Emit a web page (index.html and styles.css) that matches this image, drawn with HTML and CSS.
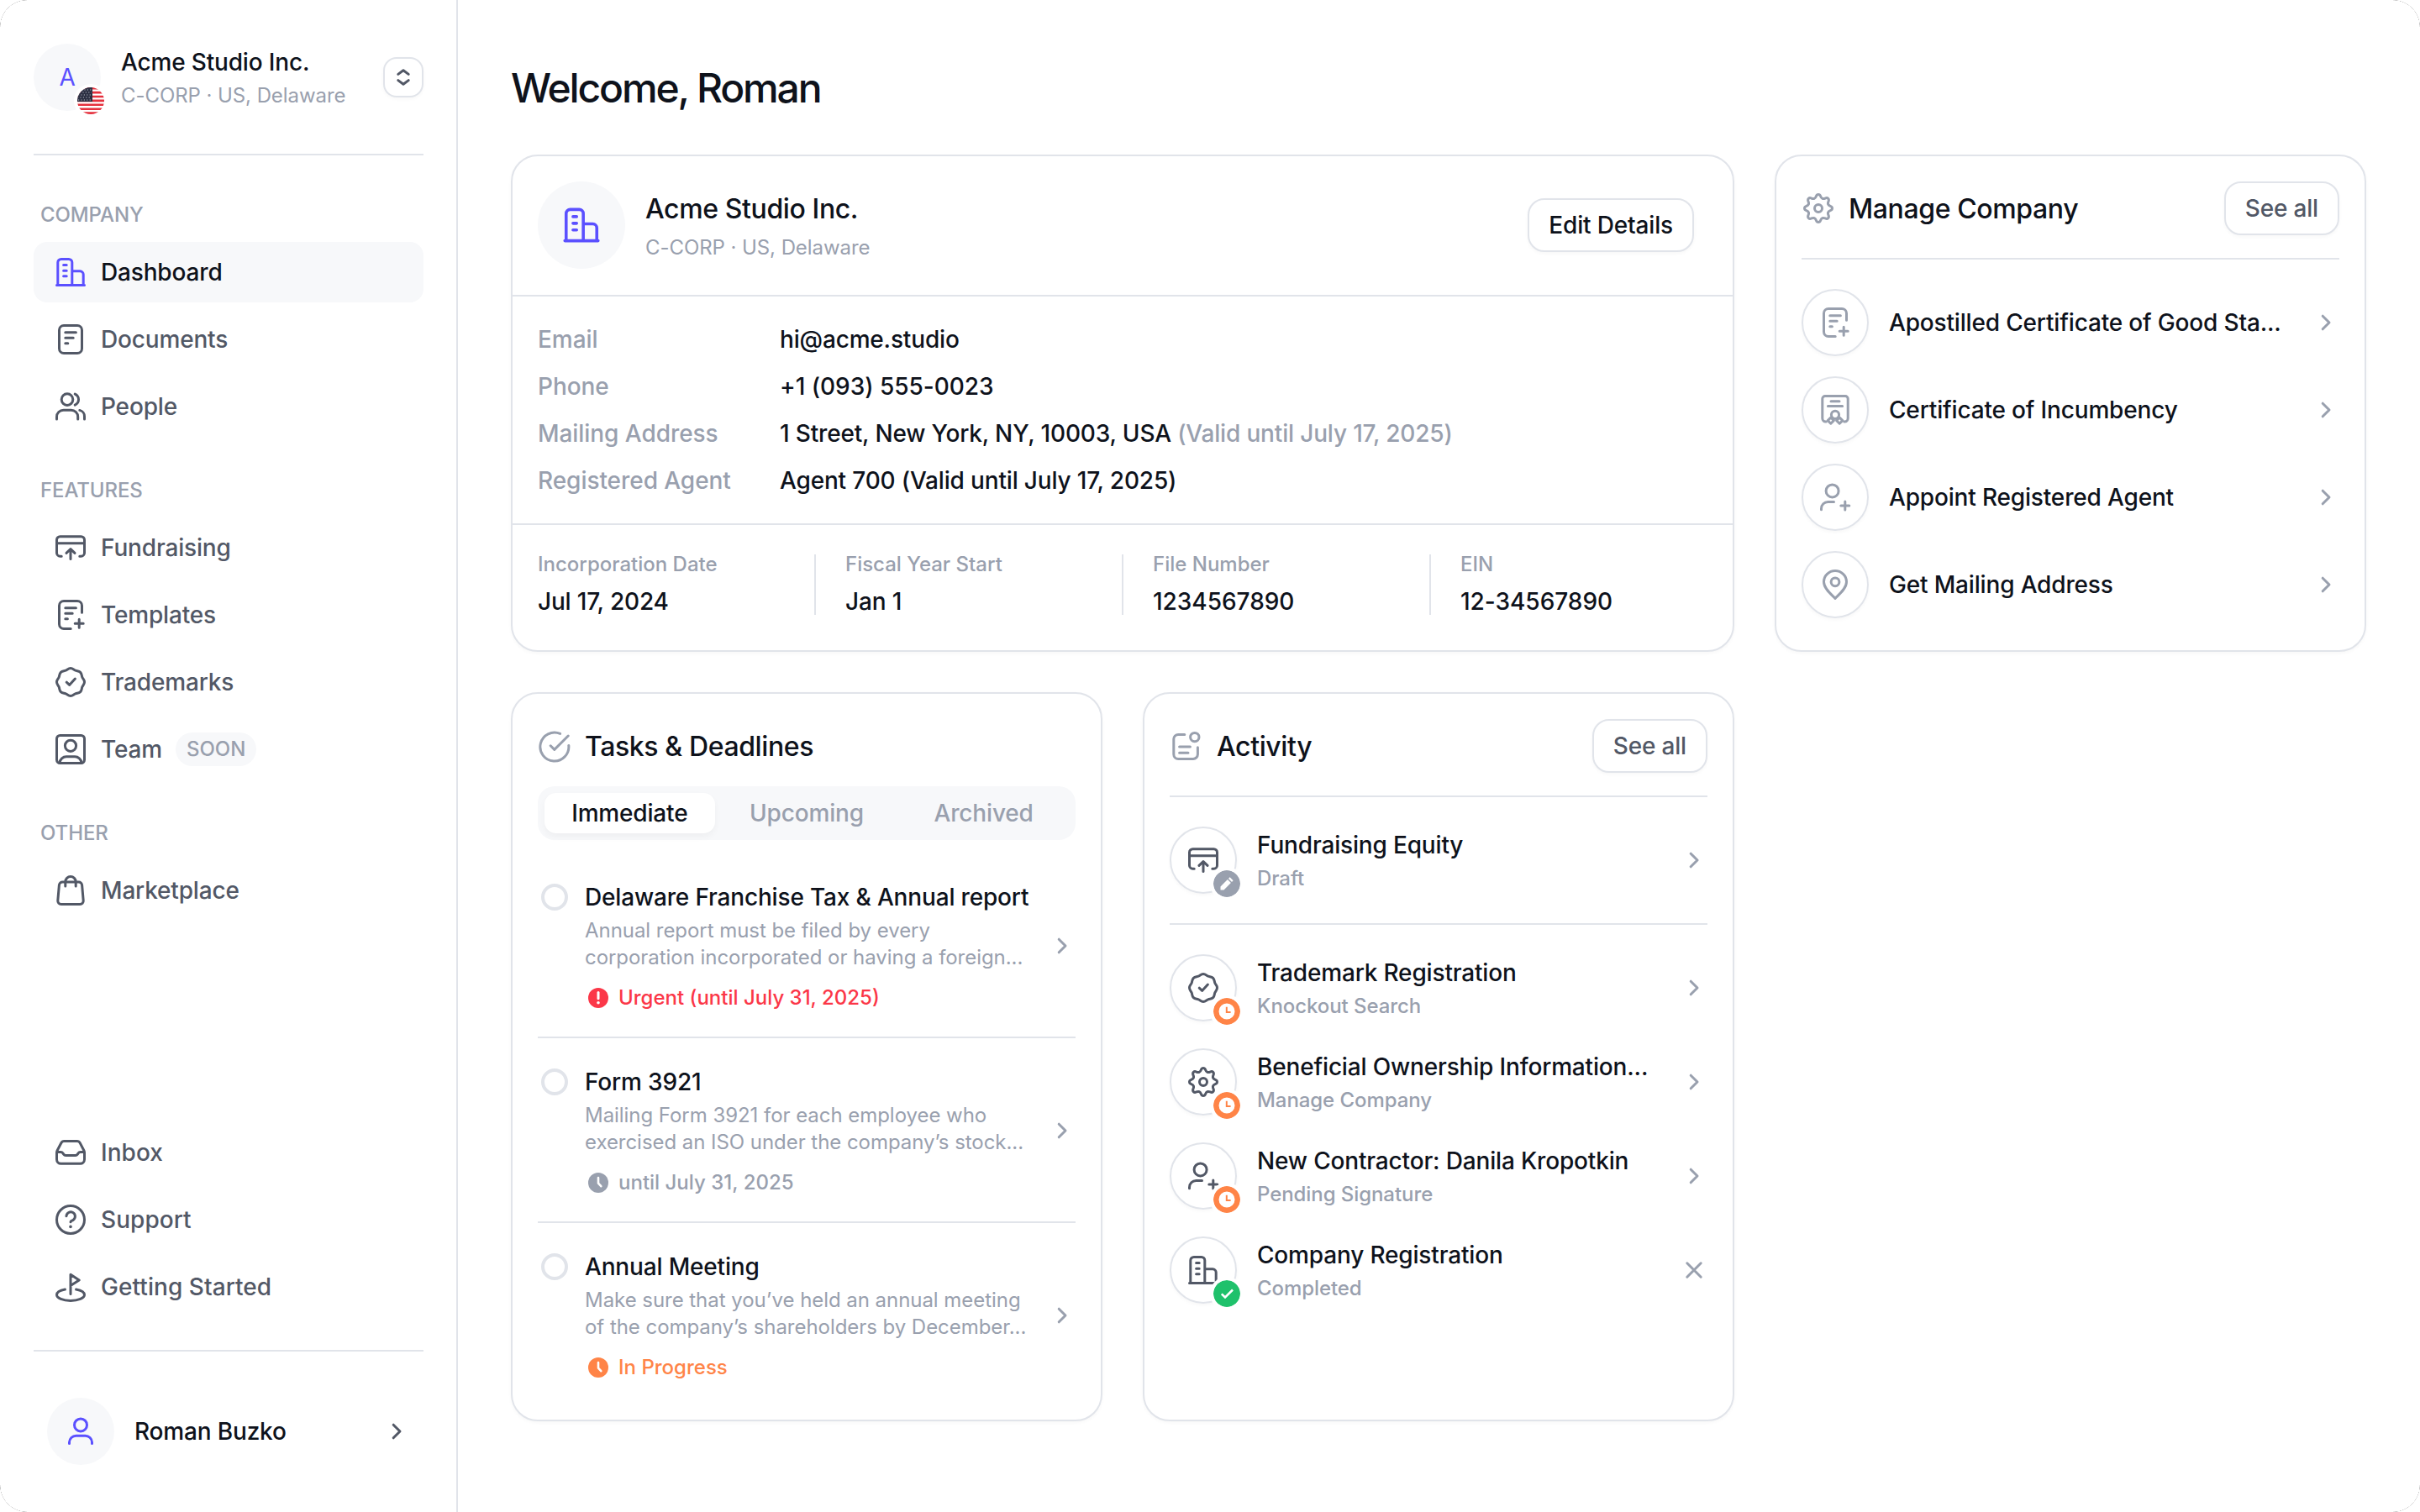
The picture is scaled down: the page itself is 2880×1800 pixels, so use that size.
FILE: index.html
```html
<!DOCTYPE html>
<html lang="en">
<head>
    <meta charset="UTF-8">
    <meta name="viewport" content="width=device-width, initial-scale=1.0">
    <title>Dashboard - Acme Studio Inc.</title>
    <link rel="stylesheet" href="styles.css">
</head>
<body>
    <!-- icon sprite -->
    <svg class="sprite" width="0" height="0">
        <symbol id="i-building" viewBox="0 0 20 20"><path d="M2.4 17.75V4.25a2 2 0 0 1 2-2h4.5a2 2 0 0 1 2 2v13.5M10.9 9.4h4.7a2 2 0 0 1 2 2v6.3M1.75 17.75h16.5M5.8 5.8h1.8M5.8 9.1h1.8M5.8 12.4h1.8"/></symbol>
        <symbol id="i-document" viewBox="0 0 20 20"><rect x="3.25" y="1.75" width="13.5" height="16.5" rx="2.75"/><path d="M6.9 5.9h6.3M6.9 9.1h4.7M6.9 12.4h1.5"/></symbol>
        <symbol id="i-template" viewBox="0 0 20 20"><path d="M16.75 8.6V4.5A2.75 2.75 0 0 0 14 1.75H6A2.75 2.75 0 0 0 3.25 4.5v11A2.75 2.75 0 0 0 6 18.25h4.1M6.9 5.9h6.3M6.9 9.1h4.2M6.9 12.4h1.3M15.1 12.6v5M12.6 15.1h5"/></symbol>
        <symbol id="i-people" viewBox="0 0 20 20"><circle cx="8" cy="5.8" r="3.4"/><path d="M1.75 17.5v-1.4a4 4 0 0 1 4-4h4.6a4 4 0 0 1 4 4v1.4M12.6 2.5a3.6 3.6 0 0 1 0 6.6M15.4 12.2a3.6 3.6 0 0 1 2.85 3.7v1.6"/></symbol>
        <symbol id="i-fund" viewBox="0 0 20 20"><path d="M4.6 15.1h-.85a2 2 0 0 1-2-2V5.35a2 2 0 0 1 2-2h12.5a2 2 0 0 1 2 2v7.75a2 2 0 0 1-2 2h-.85M1.75 7.4h16.5M10 16.7v-5.8M7.5 13.2l2.5-2.4 2.5 2.4"/></symbol>
        <symbol id="i-trademark" viewBox="0 0 20 20"><path d="M10 1.75c1.3 0 1.85.9 2.87 1.32c1.02.42 2.04.18 2.96 1.1c.92.92.68 1.94 1.1 2.96c.42 1.02 1.32 1.57 1.32 2.87c0 1.3-.9 1.85-1.32 2.87c-.42 1.02-.18 2.04-1.1 2.96c-.92.92-1.94.68-2.96 1.1c-1.02.42-1.57 1.32-2.87 1.32c-1.3 0-1.85-.9-2.87-1.32c-1.02-.42-2.04-.18-2.96-1.1c-.92-.92-.68-1.94-1.1-2.96c-.42-1.02-1.32-1.57-1.32-2.87c0-1.3.9-1.85 1.32-2.87c.42-1.02.18-2.04 1.1-2.96c.92-.92 1.94-.68 2.96-1.1c1.02-.42 1.57-1.32 2.87-1.32zM7.6 10.1l1.7 1.6 3.4-3.7"/></symbol>
        <symbol id="i-team" viewBox="0 0 20 20"><rect x="1.75" y="1.75" width="16.5" height="16.5" rx="2"/><circle cx="10" cy="7.9" r="3.3"/><path d="M3.5 18a4 4 0 0 1 4-3.6h5a4 4 0 0 1 4 3.6"/></symbol>
        <symbol id="i-bag" viewBox="0 0 20 20"><path d="M5.2 5h9.6a2 2 0 0 1 2 1.85l.8 9.2a2 2 0 0 1-2 2.2H4.4a2 2 0 0 1-2-2.2l.8-9.2A2 2 0 0 1 5.2 5zM6.9 7.5V4.85a3.1 3.1 0 0 1 6.2 0V7.5"/></symbol>
        <symbol id="i-inbox" viewBox="0 0 20 20"><path d="M6.2 3.25h7.6a2 2 0 0 1 1.8 1.1l2.3 4.4a3 3 0 0 1 .35 1.4v4a2.5 2.5 0 0 1-2.5 2.5H4.25a2.5 2.5 0 0 1-2.5-2.5v-4a3 3 0 0 1 .35-1.4l2.3-4.4a2 2 0 0 1 1.8-1.1zM1.75 9.75h2.4a1.6 1.6 0 0 1 1.3.7l.4.6a1.6 1.6 0 0 0 1.3.7h5.7a1.6 1.6 0 0 0 1.3-.7l.4-.6a1.6 1.6 0 0 1 1.3-.7h2.4"/></symbol>
        <symbol id="i-help" viewBox="0 0 20 20"><circle cx="10" cy="10" r="8.25"/><path d="M7.5 7.9a2.6 2.6 0 1 1 4 2.3c-.9.55-1.5.6-1.5 1.2"/><circle cx="10" cy="14.2" r=".9" fill="currentColor" stroke="none"/></symbol>
        <symbol id="i-golf" viewBox="0 0 20 20"><path d="M10 14.2V2.6l5.1 3.4L10 9.2M6.7 11.5C3.8 12 1.75 13.2 1.75 14.8c0 1.9 3.7 3.4 8.25 3.4s8.25-1.5 8.25-3.4c0-1.6-2.05-2.8-4.95-3.3"/></symbol>
        <symbol id="i-user" viewBox="0 0 20 20"><circle cx="10" cy="6.2" r="3.75"/><path d="M3.25 17.3v-.8a4 4 0 0 1 4-3.9h5.5a4 4 0 0 1 4 3.9v.8"/></symbol>
        <symbol id="i-user-plus" viewBox="0 0 20 20"><circle cx="8.3" cy="6.2" r="3.75"/><path d="M1.75 17.4v-.7a4 4 0 0 1 4-4h3.5M15.9 12.5v5M13.4 15h5"/></symbol>
        <symbol id="i-gear" viewBox="0 0 20 20"><path d="M10 1.75c1.7 0 .93 1.82 2.41 2.43c1.48.61 2.22-1.21 3.42-.01c1.2 1.2-.62 1.94-.01 3.42c.61 1.48 2.43.71 2.43 2.41c0 1.7-1.82.93-2.43 2.41c-.61 1.48 1.21 2.22.01 3.42c-1.2 1.2-1.94-.62-3.42-.01c-1.48.61-.71 2.43-2.41 2.43c-1.7 0-.93-1.82-2.41-2.43c-1.48-.61-2.22 1.21-3.42.01c-1.2-1.2.62-1.94.01-3.42c-.61-1.48-2.43-.71-2.43-2.41c0-1.7 1.82-.93 2.43-2.41c.61-1.48-1.21-2.22-.01-3.42c1.2-1.2 1.94.62 3.42.01c1.48-.61.71-2.43 2.41-2.43z"/><circle cx="10" cy="10" r="2.25"/></symbol>
        <symbol id="i-cert" viewBox="0 0 20 20"><path d="M4.6 17h-.2a2 2 0 0 1-2-2V3.35a1.6 1.6 0 0 1 1.6-1.6h12a1.6 1.6 0 0 1 1.6 1.6V15a2 2 0 0 1-2 2h-.2M7.5 4.9h5M5.7 7.8h8.6M7.4 14.5l1.8 1.8-1.8 1.8-1.8-1.8zM12.6 14.5l1.8 1.8-1.8 1.8-1.8-1.8z"/><circle cx="10" cy="12.9" r="2.3"/></symbol>
        <symbol id="i-pin" viewBox="0 0 20 20"><path d="M10 18.2C7.4 15.6 3.25 12.2 3.25 8.4a6.75 6.65 0 0 1 13.5 0c0 3.8-4.15 7.2-6.75 9.8z"/><circle cx="10" cy="8.4" r="2.45"/></symbol>
        <symbol id="i-tasks" viewBox="0 0 20 20"><path d="M13.3 2.2A8.5 8.5 0 1 0 18.4 9.2M7.6 9.4l2.3 2.3 8.2-8.2"/></symbol>
        <symbol id="i-activity" viewBox="0 0 20 20"><path d="M8.9 3.2H5.1a2.7 2.7 0 0 0-2.7 2.7V15a2.7 2.7 0 0 0 2.7 2.7h8.9a2.7 2.7 0 0 0 2.7-2.7v-4.1M5.8 10.5h6.4M5.8 14.1H11"/><circle cx="14.9" cy="4.8" r="2.6"/></symbol>
        <symbol id="i-chevron" viewBox="0 0 20 20"><path d="M8.1 6.1L12 10l-3.9 3.9"/></symbol>
        <symbol id="i-close" viewBox="0 0 20 20"><path d="M5.9 5.9l8.2 8.2M14.1 5.9l-8.2 8.2"/></symbol>
        <symbol id="i-sort" viewBox="0 0 20 20"><path d="M6.9 8.2L10 5.9l3.1 2.3M6.9 11.8l3.1 2.3 3.1-2.3"/></symbol>
        <symbol id="i-clock-badge" viewBox="0 0 32 32"><circle cx="16" cy="16" r="12.75" fill="#fff" stroke="#ff8447" stroke-width="6.5"/><path d="M15.8 10.8v6.1h4.8" fill="none" stroke="#ff8447" stroke-width="2" stroke-linecap="butt" stroke-linejoin="miter"/></symbol>
        <symbol id="i-draft-badge" viewBox="0 0 32 32"><circle cx="16" cy="16" r="16" fill="#99a0ae" stroke="none"/><path d="M8.5 23.5v-4l8.4-8.5 4 4-8.4 8.5zM18 9.9l1.6-1.6 4 4-1.6 1.6z" fill="#fff" stroke="none"/></symbol>
        <symbol id="i-done-badge" viewBox="0 0 32 32"><circle cx="16" cy="16" r="16" fill="#1fc16b" stroke="none"/><path d="M9.8 16.3l4.2 4.2 9-9" fill="none" stroke="#fff" stroke-width="2.6" stroke-linecap="butt" stroke-linejoin="miter"/></symbol>
        <symbol id="i-alert" viewBox="0 0 24 24"><circle cx="12" cy="12" r="12" fill="currentColor" stroke="none"/><path d="M12 5.6v7.2" stroke="#fff" stroke-width="3"/><circle cx="12" cy="17.8" r="1.8" fill="#fff" stroke="none"/></symbol>
        <symbol id="i-clock" viewBox="0 0 24 24"><circle cx="12" cy="12" r="12" fill="currentColor" stroke="none"/><path d="M12 6v6.6l3.3 3.6" stroke="#fff" stroke-width="2.6"/></symbol>
        <symbol id="i-flag" viewBox="0 0 32 32">
            <path d="M0 0h32v32H0z" fill="#fff" stroke="none"/>
            <path d="M0 1.2h32M0 6.1h32M0 11h32M0 15.9h32M0 20.8h32M0 25.7h32M0 30.6h32" stroke="#e5303d" stroke-width="2.6"/>
            <path d="M0 0h18v17H0z" fill="#2b2f42" stroke="none"/>
            <path d="M5 3h13M3 6h14M1 9h17M0 12h17M1 15h17" stroke="#b4b7c2" stroke-width="1.2" stroke-dasharray="1.2 2.2" stroke-linecap="butt"/>
        </symbol>
    </svg>

    <div class="layout">
        <aside class="sidebar">
            <div class="company-switch">
                <div class="avatar">A
                    <svg class="flag"><use href="#i-flag"/></svg>
                </div>
                <div class="company-info">
                    <div class="label">Acme Studio Inc.</div>
                    <div class="sub">C-CORP · US, Delaware</div>
                </div>
                <button class="sort-btn"><svg class="icon"><use href="#i-sort"/></svg></button>
            </div>

            <nav class="nav">
                <div class="nav-title">COMPANY</div>
                <a class="nav-item active"><svg class="icon"><use href="#i-building"/></svg>Dashboard</a>
                <a class="nav-item"><svg class="icon"><use href="#i-document"/></svg>Documents</a>
                <a class="nav-item"><svg class="icon"><use href="#i-people"/></svg>People</a>
            </nav>
            <nav class="nav">
                <div class="nav-title">FEATURES</div>
                <a class="nav-item"><svg class="icon"><use href="#i-fund"/></svg>Fundraising</a>
                <a class="nav-item"><svg class="icon"><use href="#i-template"/></svg>Templates</a>
                <a class="nav-item"><svg class="icon"><use href="#i-trademark"/></svg>Trademarks</a>
                <a class="nav-item"><svg class="icon"><use href="#i-team"/></svg>Team<span class="soon">SOON</span></a>
            </nav>
            <nav class="nav">
                <div class="nav-title">OTHER</div>
                <a class="nav-item"><svg class="icon"><use href="#i-bag"/></svg>Marketplace</a>
            </nav>
            <nav class="nav nav-bottom">
                <a class="nav-item"><svg class="icon"><use href="#i-inbox"/></svg>Inbox</a>
                <a class="nav-item"><svg class="icon"><use href="#i-help"/></svg>Support</a>
                <a class="nav-item"><svg class="icon"><use href="#i-golf"/></svg>Getting Started</a>
            </nav>

            <div class="user">
                <div class="avatar"><svg class="icon"><use href="#i-user"/></svg></div>
                <div class="label user-name">Roman Buzko</div>
                <svg class="icon user-arrow"><use href="#i-chevron"/></svg>
            </div>
        </aside>

        <main class="main">
            <h1>Welcome, Roman</h1>
            <div class="cards">
                <section class="card company">
                    <div class="company-head">
                        <div class="avatar big"><svg class="icon"><use href="#i-building"/></svg></div>
                        <div class="company-info">
                            <h2>Acme Studio Inc.</h2>
                            <div class="sub">C-CORP · US, Delaware</div>
                        </div>
                        <button class="btn dark">Edit Details</button>
                    </div>
                    <dl class="details">
                        <dt>Email</dt><dd>hi@acme.studio</dd>
                        <dt>Phone</dt><dd class="num">+1 (093) 555-0023</dd>
                        <dt>Mailing Address</dt><dd>1 Street, New York, NY, 10003, USA <span>(Valid until July 17, 2025)</span></dd>
                        <dt>Registered Agent</dt><dd>Agent 700 (Valid until July 17, 2025)</dd>
                    </dl>
                    <div class="facts">
                        <div class="fact"><div class="fact-name">Incorporation Date</div><div class="label">Jul 17, 2024</div></div>
                        <div class="fact"><div class="fact-name">Fiscal Year Start</div><div class="label">Jan 1</div></div>
                        <div class="fact"><div class="fact-name">File Number</div><div class="label num">1234567890</div></div>
                        <div class="fact"><div class="fact-name">EIN</div><div class="label num">12-34567890</div></div>
                    </div>
                </section>

                <section class="card">
                    <div class="card-head">
                        <svg class="icon"><use href="#i-gear"/></svg>
                        <h2>Manage Company</h2>
                        <button class="btn">See all</button>
                    </div>
                    <div class="manage-list">
                        <div class="row"><div class="circle soft"><svg class="icon"><use href="#i-template"/></svg></div><div class="row-text label">Apostilled Certificate of Good Sta...</div><svg class="icon arrow"><use href="#i-chevron"/></svg></div>
                        <div class="row"><div class="circle soft"><svg class="icon"><use href="#i-cert"/></svg></div><div class="row-text label">Certificate of Incumbency</div><svg class="icon arrow"><use href="#i-chevron"/></svg></div>
                        <div class="row"><div class="circle soft"><svg class="icon"><use href="#i-user-plus"/></svg></div><div class="row-text label">Appoint Registered Agent</div><svg class="icon arrow"><use href="#i-chevron"/></svg></div>
                        <div class="row"><div class="circle soft"><svg class="icon"><use href="#i-pin"/></svg></div><div class="row-text label">Get Mailing Address</div><svg class="icon arrow"><use href="#i-chevron"/></svg></div>
                    </div>
                </section>

                <section class="card">
                    <div class="card-head plain">
                        <svg class="icon"><use href="#i-tasks"/></svg>
                        <h2>Tasks &amp; Deadlines</h2>
                    </div>
                    <div class="tabs">
                        <div class="tab active">Immediate</div>
                        <div class="tab">Upcoming</div>
                        <div class="tab">Archived</div>
                    </div>
                    <div class="tasks">
                        <div class="task">
                            <span class="radio"></span>
                            <div class="task-body">
                                <div class="label">Delaware Franchise Tax &amp; Annual report</div>
                                <p>Annual report must be filed by every<br>corporation incorporated or having a foreign...</p>
                                <div class="status red"><svg><use href="#i-alert"/></svg>Urgent (until July 31, 2025)</div>
                            </div>
                            <svg class="icon arrow"><use href="#i-chevron"/></svg>
                        </div>
                        <div class="task">
                            <span class="radio"></span>
                            <div class="task-body">
                                <div class="label">Form 3921</div>
                                <p>Mailing Form 3921 for each employee who<br>exercised an ISO under the company’s stock...</p>
                                <div class="status"><svg><use href="#i-clock"/></svg>until July 31, 2025</div>
                            </div>
                            <svg class="icon arrow"><use href="#i-chevron"/></svg>
                        </div>
                        <div class="task">
                            <span class="radio"></span>
                            <div class="task-body">
                                <div class="label">Annual Meeting</div>
                                <p>Make sure that you’ve held an annual meeting<br>of the company’s shareholders by December...</p>
                                <div class="status orange"><svg><use href="#i-clock"/></svg>In Progress</div>
                            </div>
                            <svg class="icon arrow"><use href="#i-chevron"/></svg>
                        </div>
                    </div>
                </section>

                <section class="card">
                    <div class="card-head">
                        <svg class="icon"><use href="#i-activity"/></svg>
                        <h2>Activity</h2>
                        <button class="btn">See all</button>
                    </div>
                    <div class="draft">
                        <div class="row"><div class="circle"><svg class="icon"><use href="#i-fund"/></svg><svg class="badge"><use href="#i-draft-badge"/></svg></div><div class="row-text"><div class="label">Fundraising Equity</div><div class="sub">Draft</div></div><svg class="icon arrow"><use href="#i-chevron"/></svg></div>
                    </div>
                    <div class="activity-list">
                        <div class="row"><div class="circle"><svg class="icon"><use href="#i-trademark"/></svg><svg class="badge"><use href="#i-clock-badge"/></svg></div><div class="row-text"><div class="label">Trademark Registration</div><div class="sub">Knockout Search</div></div><svg class="icon arrow"><use href="#i-chevron"/></svg></div>
                        <div class="row"><div class="circle"><svg class="icon"><use href="#i-gear"/></svg><svg class="badge"><use href="#i-clock-badge"/></svg></div><div class="row-text"><div class="label">Beneficial Ownership Information...</div><div class="sub">Manage Company</div></div><svg class="icon arrow"><use href="#i-chevron"/></svg></div>
                        <div class="row"><div class="circle"><svg class="icon"><use href="#i-user-plus"/></svg><svg class="badge"><use href="#i-clock-badge"/></svg></div><div class="row-text"><div class="label">New Contractor: Danila Kropotkin</div><div class="sub">Pending Signature</div></div><svg class="icon arrow"><use href="#i-chevron"/></svg></div>
                        <div class="row"><div class="circle"><svg class="icon"><use href="#i-building"/></svg><svg class="badge"><use href="#i-done-badge"/></svg></div><div class="row-text"><div class="label">Company Registration</div><div class="sub">Completed</div></div><svg class="icon arrow"><use href="#i-close"/></svg></div>
                    </div>
                </section>
            </div>
        </main>
    </div>
</body>
</html>
```
FILE: styles.css
```css
* {
    box-sizing: border-box;
}
body {
    margin: 0;
    background: #fff;
    color: #0e121b;
    font-family: Inter, "Noto Sans", sans-serif;
    font-size: 28px;
    line-height: 40px;
    letter-spacing: -0.006em;
    height: 1800px;
    overflow: hidden;
}
/* thin rounded window corners */
body::after {
    content: "";
    position: fixed;
    inset: 0;
    pointer-events: none;
    background:
        radial-gradient(circle at 32px 32px, transparent 31.4px, #c4c4c4 31.7px, transparent 32.2px) 0 0 / 32px 32px no-repeat,
        radial-gradient(circle at 0 32px, transparent 31.4px, #c4c4c4 31.7px, transparent 32.2px) 100% 0 / 32px 32px no-repeat,
        radial-gradient(circle at 32px 0, transparent 31.4px, #c4c4c4 31.7px, transparent 32.2px) 0 100% / 32px 32px no-repeat,
        radial-gradient(circle at 0 0, transparent 31.4px, #c4c4c4 31.7px, transparent 32.2px) 100% 100% / 32px 32px no-repeat;
}
h1, h2, p, dl, dd {
    margin: 0;
}
h1 {
    padding-top: 1px;
    font-size: 48px;
    line-height: 64px;
    font-weight: 500;
    letter-spacing: -0.045em;
}
h2 {
    font-size: 32px;
    line-height: 48px;
    font-weight: 500;
    letter-spacing: -0.012em;
}
.sprite {
    position: absolute;
}
svg {
    fill: none;
    stroke: currentColor;
    stroke-width: 1.5;
    stroke-linecap: round;
    stroke-linejoin: round;
    flex-shrink: 0;
}
.icon {
    display: block;
    width: 40px;
    height: 40px;
}
.layout {
    display: flex;
    height: 100%;
}
.label {
    font-weight: 500;
}
.num {
    letter-spacing: -0.001em;
}
.sub {
    font-size: 24px;
    line-height: 32px;
    letter-spacing: -0.003em;
    color: #99a0ae;
}

/* sidebar */
.sidebar {
    display: flex;
    flex-direction: column;
    width: 545px;
    padding: 52px 39px 56px 40px;
    border-right: 2px solid #e1e4ea;
    flex-shrink: 0;
}
.company-switch {
    display: flex;
    align-items: center;
    height: 133px;
    padding-bottom: 51px;
    border-bottom: 2px solid #e1e4ea;
}
.avatar {
    display: flex;
    align-items: center;
    justify-content: center;
    position: relative;
    width: 80px;
    height: 80px;
    border-radius: 50%;
    background: #f7f8fa;
    color: #5b50ff;
    flex-shrink: 0;
}
.avatar.big {
    width: 104px;
    height: 104px;
}
.avatar.big .icon {
    width: 48px;
    height: 48px;
}
.flag, .badge {
    position: absolute;
    right: -4px;
    bottom: -4px;
    width: 32px;
    height: 32px;
    border-radius: 50%;
    box-shadow: 0 0 0 4px #fff;
}
.company-info {
    flex: 1;
    margin-left: 24px;
}
.company-info .sub {
    margin-top: 4px;
}
.sort-btn {
    display: flex;
    padding: 2px;
    border: 2px solid #e1e4ea;
    border-radius: 16px;
    background: #fff;
    color: #525866;
    box-shadow: 0 2px 4px rgba(10, 13, 20, 0.03);
}
.nav {
    display: flex;
    flex-direction: column;
    gap: 8px;
    margin-top: 47px;
}
.nav + .nav {
    margin-top: 40px;
}
.nav-title {
    padding: 8px 8px 0;
    font-size: 24px;
    line-height: 32px;
    letter-spacing: -0.004em;
    color: #99a0ae;
    font-weight: 500;
    margin-bottom: 8px;
}
.nav-item {
    display: flex;
    align-items: center;
    gap: 16px;
    height: 72px;
    padding: 0 24px;
    border-radius: 16px;
    color: #525866;
    font-weight: 500;
}
.nav-item.active {
    background: #f7f8fa;
    color: #0e121b;
}
.nav-item.active .icon {
    color: #5b50ff;
}
.soon {
    padding: 4px 13px;
    border-radius: 20px;
    background: #f7f8fa;
    font-size: 24px;
    line-height: 32px;
    letter-spacing: 0;
    color: #99a0ae;
}
.nav.nav-bottom {
    margin-top: auto;
    padding-bottom: 39px;
    border-bottom: 2px solid #e1e4ea;
    letter-spacing: 0.002em;
}
.user {
    display: flex;
    align-items: center;
    padding: 55px 12px 0 16px;
}
.user-name {
    flex: 1;
    margin-left: 24px;
}
.user-arrow {
    color: #525866;
}

/* main */
.main {
    flex: 1;
    padding: 72px 64px 0 63px;
}
.cards {
    display: grid;
    grid-template-columns: 704px 704px 704px;
    grid-template-rows: 592px 868px;
    gap: 48px;
    margin-top: 47px;
}
.card {
    padding: 32px 30px 0;
    border: 2px solid #e1e4ea;
    border-radius: 32px;
    background: #fff;
    box-shadow: 0 2px 4px rgba(10, 13, 20, 0.03);
}
.card.company {
    grid-column: span 2;
    padding: 0;
}
.company-head {
    display: flex;
    align-items: center;
    height: 167px;
    padding: 0 46px 2px 30px;
    border-bottom: 2px solid #e1e4ea;
}
.company-head .company-info .sub {
    margin-top: 6px;
}
.btn {
    height: 64px;
    padding: 0 23px;
    border: 2px solid #e1e4ea;
    border-radius: 20px;
    background: #fff;
    color: #525866;
    font: inherit;
    font-weight: 500;
    letter-spacing: inherit;
    box-shadow: 0 2px 4px rgba(10, 13, 20, 0.03);
}
.btn.dark {
    color: #0e121b;
}
.details {
    display: grid;
    grid-template-columns: 288px 1fr;
    row-gap: 16px;
    padding: 31px 30px;
    height: 272px;
    border-bottom: 2px solid #e1e4ea;
    font-weight: 500;
}
.details dt, .details span {
    color: #99a0ae;
}
.details dt {
    letter-spacing: -0.002em;
}
.facts {
    display: grid;
    grid-template-columns: repeat(4, 294px);
    column-gap: 72px;
    padding: 31px 30px;
}
.fact {
    position: relative;
}
.fact-name {
    margin-bottom: 8px;
    font-size: 24px;
    line-height: 32px;
    font-weight: 500;
    letter-spacing: 0;
    color: #99a0ae;
}
.fact + .fact::before {
    content: "";
    position: absolute;
    left: -37px;
    top: 4px;
    width: 2px;
    height: 72px;
    background: #e1e4ea;
}
.card-head {
    display: flex;
    align-items: center;
    gap: 16px;
    height: 91px;
    padding-bottom: 29px;
    border-bottom: 2px solid #e1e4ea;
    color: #99a0ae;
}
.card-head h2 {
    flex: 1;
    padding-top: 2px;
    color: #0e121b;
}
.card-head .btn {
    margin: -2px 0;
}
.card-head.plain {
    height: 62px;
    padding-bottom: 0;
    border: 0;
}
.card-head.plain h2 {
    padding-top: 0;
}
.row {
    display: flex;
    align-items: center;
    height: 80px;
}
.circle {
    display: flex;
    align-items: center;
    justify-content: center;
    position: relative;
    width: 80px;
    height: 80px;
    border: 2px solid #e1e4ea;
    border-radius: 50%;
    color: #525866;
    box-shadow: 0 2px 4px rgba(10, 13, 20, 0.03);
}
.circle.soft, .arrow {
    color: #99a0ae;
}
.circle .badge {
    right: -6px;
    bottom: -6px;
}
.row-text {
    flex: 1;
    margin-left: 24px;
    white-space: nowrap;
}
.row-text .sub {
    margin-top: 4px;
    font-weight: 500;
}
.arrow {
    margin: 0 -4px;
}
.manage-list {
    display: flex;
    flex-direction: column;
    gap: 24px;
    padding-top: 35px;
}

/* tasks */
.tabs {
    display: grid;
    grid-template-columns: repeat(3, 1fr);
    gap: 8px;
    height: 64px;
    margin-top: 16px;
    padding: 8px;
    border-radius: 20px;
    background: #f7f8fa;
}
.tab {
    border-radius: 14px;
    color: #99a0ae;
    font-weight: 500;
    line-height: 48px;
    text-align: center;
}
.tab.active {
    background: #fff;
    color: #0e121b;
    box-shadow: 0 4px 8px rgba(14, 18, 27, 0.04);
}
.tasks {
    padding-top: 16px;
}
.task {
    display: flex;
    align-items: center;
    padding: 32px 0 30px;
}
.task + .task {
    border-top: 2px solid #e1e4ea;
}
.radio {
    align-self: flex-start;
    width: 32px;
    height: 32px;
    margin: 4px 20px 0 4px;
    border: 4px solid #e1e4ea;
    border-radius: 50%;
}
.task-body {
    flex: 1;
    white-space: nowrap;
}
.task p {
    margin-top: 4px;
    font-size: 24px;
    line-height: 32px;
    letter-spacing: -0.002em;
    color: #99a0ae;
}
.status {
    display: flex;
    align-items: center;
    gap: 12px;
    margin-top: 16px;
    padding-left: 4px;
    font-size: 24px;
    line-height: 32px;
    font-weight: 500;
    letter-spacing: 0;
    color: #99a0ae;
}
.status svg {
    width: 24px;
    height: 24px;
}
.status.red {
    color: #fb3748;
}
.status.orange {
    color: #ff8447;
}

/* activity */
.draft {
    padding: 35px 0;
    border-bottom: 2px solid #e1e4ea;
}
.activity-list {
    display: flex;
    flex-direction: column;
    gap: 32px;
    padding-top: 35px;
}
```
